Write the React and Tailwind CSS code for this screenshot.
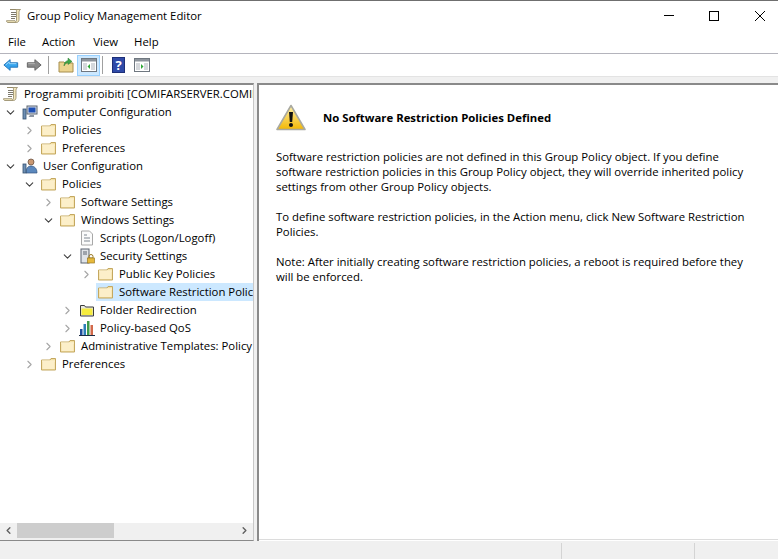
import { ChevronDown, ChevronRight, ChevronLeft } from 'lucide-react'

function ScrollIcon({ className = '' }) {
  return (
    <svg viewBox="0 0 16 16" className={`w-4 h-4 ${className}`}>
      <path d="M4 1.500h10.500c-1 .8-1.500 1.800-1.500 3v7c0 1.800-1 3-2.500 3H2c-1 0-1.500-.8-1.500-1.800h8.500c0 1 1.500 1.300 1.500-.2V4c0-1 .2-2-1-2.500z" fill="#f3e7bd" stroke="#8f8462" strokeWidth="0.8" />
      <path d="M5 4.500h5M5 6.500h5M5 8.500h5M5 10.500h4" stroke="#6e6a5c" strokeWidth="0.9" />
    </svg>
  )
}

function FolderIcon({ yellow = false }) {
  if (yellow) {
    return (
      <svg viewBox="0 0 16 16" className="w-4 h-4 shrink-0">
        <path d="M1.500 3.500h4l1 1.500h8v9h-13z" fill="#e8e8e0" stroke="#3c3c3c" strokeWidth="1" />
        <path d="M2.500 6.500h11v6.500h-11z" fill="#f6ec3e" />
      </svg>
    )
  }
  return (
    <svg viewBox="0 0 16 16" className="w-4 h-4 shrink-0">
      <path d="M0.500 4h8.500l1-1.500h4.500v11.500h-14z" fill="#f3dfa3" stroke="#c4a860" strokeWidth="1" />
      <path d="M1.500 5.500h12v7.500h-12z" fill="#fcefc9" />
      <path d="M1 5h13" stroke="#fff8e0" strokeWidth="1" />
    </svg>
  )
}

function ComputerIcon() {
  return (
    <svg viewBox="0 0 16 16" className="w-4 h-4 shrink-0">
      <rect x="5" y="2" width="10" height="8" fill="#d6dde6" stroke="#5a6472" strokeWidth="1" />
      <rect x="6.500" y="3.500" width="7" height="5" fill="#1d4fb5" />
      <path d="M8 11h4v2H6.500z" fill="#8d96a3" />
      <rect x="1" y="5" width="3" height="10" fill="#6f8fb4" stroke="#34506f" strokeWidth="0.8" />
    </svg>
  )
}

function UserIcon() {
  return (
    <svg viewBox="0 0 16 16" className="w-4 h-4 shrink-0">
      <circle cx="9" cy="4" r="3" fill="#c99872" stroke="#5f4637" strokeWidth="0.7" />
      <path d="M4 15c0-5 2-7 5-7s6 2 6 7z" fill="#5b88bd" stroke="#33557e" strokeWidth="0.7" />
      <rect x="1" y="6" width="3" height="9" fill="#6f8fb4" stroke="#34506f" strokeWidth="0.8" />
    </svg>
  )
}

function ScriptsIcon() {
  return (
    <svg viewBox="0 0 16 16" className="w-4 h-4 shrink-0">
      <path d="M2.500 1h8l3 3v11h-11z" fill="#fbfbfb" stroke="#a8a8a8" strokeWidth="1" />
      <path d="M5 5h3M5 8h6M5 11h6" stroke="#7f8790" strokeWidth="1" />
    </svg>
  )
}

function SecurityIcon() {
  return (
    <svg viewBox="0 0 16 16" className="w-4 h-4 shrink-0">
      <rect x="2" y="1" width="8" height="14" fill="#dfe3e8" stroke="#5d6570" strokeWidth="1" />
      <path d="M4 4h4M4 6h4" stroke="#5d6570" strokeWidth="1" />
      <path d="M10 8.500a2 2 0 0 1 4 0V10h-4z" fill="none" stroke="#9a7a24" strokeWidth="1" />
      <rect x="8.500" y="10" width="7" height="5" fill="#e6b93c" stroke="#9a7a24" strokeWidth="0.7" />
    </svg>
  )
}

function QosIcon() {
  return (
    <svg viewBox="0 0 16 16" className="w-4 h-4 shrink-0">
      <rect x="1" y="9" width="2.500" height="6" fill="#1f4e9c" />
      <rect x="4.500" y="4" width="2.500" height="11" fill="#2c7fb8" />
      <rect x="8" y="1" width="2.500" height="14" fill="#3f9a4a" />
      <rect x="11.500" y="5" width="2.500" height="10" fill="#d2694a" />
      <path d="M0 15.500h16" stroke="#1b2a44" strokeWidth="1" />
    </svg>
  )
}

function BackArrow() {
  return (
    <svg viewBox="0 0 18 14" className="w-[16px] h-[14px] block">
      <path d="M1 7l7-6v3.500h8.500v5H8V13z" fill="#35a4ee" stroke="#1c6fb5" strokeWidth="1" />
      <path d="M3 7l4-3.500v2h8" stroke="#a5dcfb" strokeWidth="1" fill="none" />
    </svg>
  )
}

function ForwardArrow() {
  return (
    <svg viewBox="0 0 18 14" className="w-[16px] h-[14px] block">
      <path d="M17 7l-7-6v3.500H1.500v5H10V13z" fill="#8a8a8a" stroke="#5e5e5e" strokeWidth="1" />
      <path d="M2.500 5.500H10" stroke="#bdbdbd" strokeWidth="1" />
    </svg>
  )
}

function UpFolder() {
  return (
    <svg viewBox="0 0 16 16" className="w-4 h-4 block">
      <path d="M1 5h5l1 1h8v9H1z" fill="#ecd48f" stroke="#a68e4f" strokeWidth="1" />
      <path d="M6 9c0-3 1.500-5 4-5.500V1l4 3.500-4 3V5.500C8 6 7 7 6 9z" fill="#3fa648" stroke="#2b7d33" strokeWidth="0.5" />
    </svg>
  )
}

function PaneIcon({ side }) {
  const hide = side === 'left'
  return (
    <svg viewBox="0 0 16 14" className="w-4 h-[14px] block">
      <rect x="0.500" y="0.500" width="15" height="13" fill="#fff" stroke="#6f7780" />
      <rect x="1" y="1" width="14" height="2.500" fill="#8d949c" />
      <rect x="2" y="5" width="4" height="7" fill="#d5d8dc" />
      <rect x="10" y="5" width="4" height="7" fill="#d5d8dc" />
      {hide ? <path d="M9 6v5L6.500 8.500z" fill="#2fa836" /> : <path d="M7 6v5l2.500-2.500z" fill="#2fa836" />}
    </svg>
  )
}

function HelpIcon() {
  return (
    <div className="w-[13px] h-[16px] bg-[#2f4aa8] flex items-center justify-center text-white font-bold text-[13px] leading-none border border-[#1d2f78]">?</div>
  )
}

function WarningIcon() {
  return (
    <svg viewBox="0 0 30 27" className="w-[30px] h-[27px] mt-[2px] shrink-0">
      <defs>
        <linearGradient id="warn" x1="0" y1="0" x2="0" y2="1">
          <stop offset="0" stopColor="#fff0a8" />
          <stop offset="1" stopColor="#f2b705" />
        </linearGradient>
      </defs>
      <path d="M15 1.500L29 25.500H1z" fill="url(#warn)" stroke="#a9a9a0" strokeWidth="1.600" strokeLinejoin="round" />
      <path d="M13 8h4l-.8 10h-2.400z" fill="#111" />
      <circle cx="15" cy="21" r="2" fill="#111" />
    </svg>
  )
}

const tree = [
  { level: 0, icon: <ComputerIcon />, label: 'Computer Configuration', open: true },
  { level: 1, icon: <FolderIcon />, label: 'Policies' },
  { level: 1, icon: <FolderIcon />, label: 'Preferences' },
  { level: 0, icon: <UserIcon />, label: 'User Configuration', open: true },
  { level: 1, icon: <FolderIcon />, label: 'Policies', open: true },
  { level: 2, icon: <FolderIcon />, label: 'Software Settings' },
  { level: 2, icon: <FolderIcon />, label: 'Windows Settings', open: true },
  { level: 3, icon: <ScriptsIcon />, label: 'Scripts (Logon/Logoff)', leaf: true },
  { level: 3, icon: <SecurityIcon />, label: 'Security Settings', open: true },
  { level: 4, icon: <FolderIcon />, label: 'Public Key Policies' },
  { level: 4, icon: <FolderIcon />, label: 'Software Restriction Policies', leaf: true, selected: true },
  { level: 3, icon: <FolderIcon yellow />, label: 'Folder Redirection' },
  { level: 3, icon: <QosIcon />, label: 'Policy-based QoS' },
  { level: 2, icon: <FolderIcon />, label: 'Administrative Templates: Policy definitions' },
  { level: 1, icon: <FolderIcon />, label: 'Preferences' },
]

const indents = ['pl-[3px]', 'pl-[22px]', 'pl-[41px]', 'pl-[60px]', 'pl-[79px]']

function TreeRow({ row }) {
  return (
    <div className={`flex items-center h-[18px] ${indents[row.level]}`}>
      <span className="w-[15px] shrink-0 flex justify-center">
        {row.leaf ? null : row.open ? (
          <ChevronDown size={13} strokeWidth={2} className="text-[#404040]" />
        ) : (
          <ChevronRight size={13} strokeWidth={2} className="text-[#a6a6a6]" />
        )}
      </span>
      <span className={`flex items-center h-[18px] ml-[2px] pl-[2px] flex-1 min-w-0 overflow-hidden ${row.selected ? 'bg-[#cce8ff]' : ''}`}>
        {row.icon}
        <span className="ml-[5px] whitespace-nowrap">{row.label}</span>
      </span>
    </div>
  )
}

export default function App() {
  return (
    <div className="w-[778px] h-[559px] flex flex-col overflow-hidden bg-white text-black text-[11.35px] font-['Open_Sans','Noto_Sans',sans-serif] border-t border-[#6f6f6f]">
      <div className="h-[29px] shrink-0 flex items-center pl-[6px]">
        <ScrollIcon />
        <span className="ml-[5px]">Group Policy Management Editor</span>
        <div className="ml-auto pr-[13px] flex items-center">
          <div className="w-[10px] h-px bg-black" />
          <div className="ml-[35px] w-[10px] h-[10px] border border-black" />
          <svg viewBox="0 0 10 10" className="ml-[36px] w-[10px] h-[10px]"><path d="M0 0l10 10M10 0L0 10" stroke="#000" strokeWidth="1" /></svg>
        </div>
      </div>

      <div className="h-[24px] shrink-0 flex items-center pl-[8px] pt-[1px] border-b border-[#b4b4bc]">
        <span>File</span>
        <span className="ml-[16px]">Action</span>
        <span className="ml-[18px]">View</span>
        <span className="ml-[16px]">Help</span>
      </div>

      <div className="h-[22px] shrink-0 flex items-center pl-[3px]">
        <BackArrow />
        <span className="ml-[7px]"><ForwardArrow /></span>
        <div className="ml-[6px] w-px h-[18px] bg-[#a0a0a0]" />
        <span className="ml-[9px]"><UpFolder /></span>
        <div className="ml-[3px] w-[23px] h-[21px] bg-[#cce8ff] border border-[#99d1ff] flex items-center justify-center"><PaneIcon side="left" /></div>
        <div className="ml-[2px] w-px h-[18px] bg-[#a0a0a0]" />
        <span className="ml-[9px]"><HelpIcon /></span>
        <span className="ml-[9px]"><PaneIcon side="right" /></span>
      </div>

      <div className="h-[7px] shrink-0 bg-[#f0f0f0] border-t border-[#e3e3e3]" />

      <div className="flex-1 min-h-0 flex bg-[#f0f0f0]">
        <div className="w-[254px] shrink-0 flex flex-col bg-white border-t-2 border-b border-r border-t-[#8a8a8a] border-b-[#8a8a8a] border-r-[#c8c8c8]">
          <div className="flex-1 min-h-0 overflow-hidden">
            <div className="flex items-center h-[18px] pl-[3px]">
              <ScrollIcon className="shrink-0" />
              <span className="ml-[5px] whitespace-nowrap">Programmi proibiti [COMIFARSERVER.COMIFAR.LOCAL] Policy</span>
            </div>
            {tree.map((row, i) => (
              <TreeRow key={i} row={row} />
            ))}
          </div>
          <div className="h-[17px] shrink-0 bg-[#f0f0f0] flex items-start">
            <span className="w-[17px] h-[15px] flex items-center justify-center"><ChevronLeft size={11} strokeWidth={3} className="text-[#606060]" /></span>
            <div className="w-[97px] h-[15px] bg-[#cdcdcd]" />
            <span className="ml-auto w-[17px] h-[15px] flex items-center justify-center"><ChevronRight size={11} strokeWidth={3} className="text-[#606060]" /></span>
          </div>
        </div>
        <div className="w-[3px] shrink-0" />
        <div className="flex-1 min-w-0 flex flex-col bg-white border-l-2 border-t-2 border-[#8a8a8a]">
          <div className="flex-1 min-h-0 pl-[17px] pt-[17px] leading-[15px]">
            <div className="flex items-start h-[30px]">
              <WarningIcon />
              <span className="ml-[17px] mt-[8px] font-bold">No Software Restriction Policies Defined</span>
            </div>
            <p className="mt-[17px] w-[472px]">Software restriction policies are not defined in this Group Policy object. If you define software restriction policies in this Group Policy object, they will override inherited policy settings from other Group Policy objects.</p>
            <p className="mt-[15px] w-[472px]">To define software restriction policies, in the Action menu, click New Software Restriction Policies.</p>
            <p className="mt-[15px] w-[472px]">Note: After initially creating software restriction policies, a reboot is required before they will be enforced.</p>
          </div>
          <div className="h-px shrink-0 bg-[#dcdcdc]" />
          <div className="h-px shrink-0 bg-white" />
        </div>
      </div>

      <div className="h-[18px] shrink-0 bg-[#f0f0f0] pt-[2px] flex">
        <div className="w-[562px] border-r border-[#d4d4d4]" />
        <div className="w-[133px] border-r border-[#d4d4d4]" />
      </div>
    </div>
  )
}
